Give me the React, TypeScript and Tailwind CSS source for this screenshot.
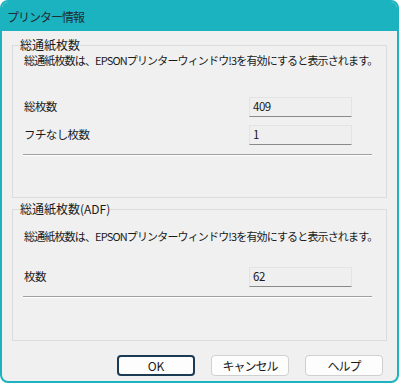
import React from "react";

const font = { fontFamily: '"Noto Sans CJK JP", "Noto Sans", sans-serif' };

function Field({ label, value }: { label: string; value: string }) {
  return (
    <div className="flex items-center h-[20px]">
      <div className="w-[225px] text-[11.5px] leading-none tracking-[-0.6px]">{label}</div>
      <div className="w-[103px] h-[20px] bg-[#efefef] border border-[#e3e3e3] border-b-[#8a8a8a] flex items-center pl-[3px] text-[11.5px] leading-none tracking-[-0.5px]">
        {value}
      </div>
    </div>
  );
}

function Group({ title, children, className }: { title: string; children: React.ReactNode; className?: string }) {
  return (
    <div className={"relative border border-[#dcdcdc] " + (className || "")}>
      <div className="absolute -top-[8px] left-[7px] bg-[#f0f0f0] text-[12px] leading-[14px] text-[#1a1a1a]">{title}</div>
      {children}
    </div>
  );
}

export default function App() {
  const msg = "総通紙枚数は、EPSONプリンターウィンドウ!3を有効にすると表示されます。";
  return (
    <div className="w-[399px] h-[384px] bg-white" style={font}>
      <div className="w-[399px] h-[383px] rounded-[8px] border-2 border-[#1cb3c1] bg-[#f0f0f0] overflow-hidden flex flex-col text-[#1a1a1a]">
        <div className="h-[29px] shrink-0 bg-[#1cb3c1] flex items-center pl-[5px] text-[12px] text-[#1f2f33] tracking-[-1px]">
          プリンター情報
        </div>
        <div className="flex-1 px-[10px] pt-[14px]">
          <Group title="総通紙枚数" className="h-[153px]">
            <div className="pl-[11px] pt-[9px] text-[11px] leading-none tracking-[-0.85px] whitespace-nowrap">{msg}</div>
            <div className="pl-[11px] pt-[31px] flex flex-col gap-[8px]">
              <Field label="総枚数" value="409" />
              <Field label="フチなし枚数" value="1" />
            </div>
            <div className="ml-[10px] mt-[9px] w-[349px] h-[2px] border-t border-[#a0a0a0] border-b-white border-b" />
          </Group>
          <Group title="総通紙枚数(ADF)" className="h-[132px] mt-[11px]">
            <div className="pl-[11px] pt-[21px] text-[11px] leading-none tracking-[-0.85px] whitespace-nowrap">{msg}</div>
            <div className="pl-[11px] pt-[25px]">
              <Field label="枚数" value="62" />
            </div>
            <div className="ml-[10px] mt-[9px] w-[349px] h-[2px] border-t border-[#a0a0a0] border-b-white border-b" />
          </Group>
          <div className="flex justify-end gap-[16px] mt-[14px] pr-[4px]">
            <button className="w-[78px] h-[21px] rounded-[4px] bg-[#fdfdfd] border-2 border-[#1b3b55] text-[12px] leading-none">OK</button>
            <button className="w-[78px] h-[21px] rounded-[4px] bg-[#fdfdfd] border border-[#d0d0d0] text-[12px] leading-none tracking-[-1px]">キャンセル</button>
            <button className="w-[78px] h-[21px] rounded-[4px] bg-[#fdfdfd] border border-[#d0d0d0] text-[12px] leading-none tracking-[-1px]">ヘルプ</button>
          </div>
        </div>
      </div>
    </div>
  );
}
